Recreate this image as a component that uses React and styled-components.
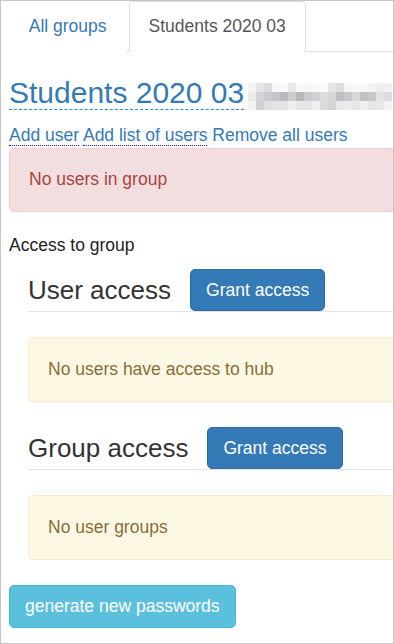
import React from 'react';
import styled, { createGlobalStyle } from 'styled-components';

const GlobalStyle = createGlobalStyle`
  html, body {
    margin: 0;
    padding: 0;
    background: #fff;
  }
  body {
    font-family: "Liberation Sans", Arial, Helvetica, sans-serif;
    font-size: 17.5px;
    line-height: 25px;
    color: #333;
  }
`;

// pixelated (blurred-out) owner name next to the title
const MOSAIC = [
  ['#f4f4f6', '#e6e4e6', '#dcdce0', '#f6f6f8', '#f8f8f8', '#e8e8ea', '#f8f8f8', '#f6f6f6', '#f8f8f8', '#fafafa', '#e6e4e6', '#dedde0', '#f6f6f6', '#f8f8fa', '#f8f8f8', '#f4f4f4', '#eeeef2', '#f0f0f4'],
  ['#ecebec', '#d4d3d8', '#cacad0', '#c4c5ca', '#bbb9bc', '#cacbcf', '#b8b6b6', '#ccccd0', '#d2d2d6', '#dcdcde', '#d6d6d8', '#c0c0c2', '#c8c8cc', '#d8d8da', '#c4c0be', '#c6c8cc', '#e4e2e2', '#dcdce4'],
  ['#f2f2f2', '#d0d0d0', '#e2e0e0', '#e2e4e6', '#e4e2e2', '#eeeef0', '#e6e6e8', '#e4e6ea', '#f0f0f0', '#dadada', '#d4d4d4', '#e8e8ea', '#ececec', '#e8e8ea', '#f2f0ee', '#e4e6e8', '#e8e8e8', '#f2f4f6'],
];

const Mosaic = () => (
  <MosaicSvg width={144} height={27} viewBox="0 0 144 27">
    {MOSAIC.map((row, r) =>
      row.map((c, i) => <rect key={r + '-' + i} x={i * 8} y={r * 9} width={8} height={9} fill={c} />)
    )}
  </MosaicSvg>
);

const App = () => {
  return (
    <>
      <GlobalStyle />
      <St.frame>
        <St.page>
          <St.tabs>
            <St.tab>All groups</St.tab>
            <St.tab $active>Students 2020 03</St.tab>
          </St.tabs>

          <St.title>
            <St.titleLink>Students 2020 03</St.titleLink>
            <Mosaic />
          </St.title>

          <St.actions>
            <St.action $dotted>Add user</St.action>{' '}
            <St.action $dotted>Add list of users</St.action>{' '}
            <St.action>Remove all users</St.action>
          </St.actions>

          <St.alert $kind="danger">No users in group</St.alert>

          <St.label>Access to group</St.label>

          <St.section>
            <St.sectionHeader>
              <St.sectionTitle>User access</St.sectionTitle>
              <St.button>Grant access</St.button>
            </St.sectionHeader>
            <St.alert $kind="warning">No users have access to hub</St.alert>

            <St.sectionHeader>
              <St.sectionTitle>Group access</St.sectionTitle>
              <St.button>Grant access</St.button>
            </St.sectionHeader>
            <St.alert $kind="warning">No user groups</St.alert>
          </St.section>

          <St.button $info>generate new passwords</St.button>
        </St.page>
      </St.frame>
    </>
  );
};

export default App;

const ALERTS = {
  danger: { bg: '#f2dede', border: '#ebccd1', color: '#a94442', pad: '18.5px', gap: '21.5px' },
  warning: { bg: '#fcf8e3', border: '#faebcc', color: '#8a6d3b', pad: '19px', gap: '25px' },
};

const MosaicSvg = styled.svg`
  display: inline-block;
  vertical-align: top;
  margin-left: 4px;
  margin-top: 7px;
`;

const St = {
  frame: styled.div`
    width: 394px;
    height: 644px;
    box-sizing: border-box;
    border: 1px solid #c6c6c6;
    overflow: hidden;
  `,
  page: styled.div`
    width: 440px;
    padding-left: 8px;
  `,
  tabs: styled.ul`
    display: flex;
    margin: 0;
    padding: 0;
    list-style: none;
    border-bottom: 1px solid #ddd;
  `,
  tab: styled.li`
    margin: 0 2.5px -1px 0;
    padding: 12px 18.75px;
    border: 1px solid ${({ $active }) => ($active ? '#ddd' : 'transparent')};
    border-bottom-color: transparent;
    border-radius: 5px 5px 0 0;
    background: #fff;
    color: ${({ $active }) => ($active ? '#555' : '#337ab7')};
    white-space: nowrap;
  `,
  title: styled.h2`
    margin: 24px 0 12.5px;
    font-size: 30px;
    font-weight: 400;
    line-height: 33px;
    white-space: nowrap;
  `,
  titleLink: styled.a`
    color: #337ab7;
    border-bottom: 1px dashed #1a93e0;
    cursor: pointer;
  `,
  actions: styled.div`
    white-space: nowrap;
  `,
  action: styled.a`
    color: #337ab7;
    cursor: pointer;
    border-bottom: ${({ $dotted }) => ($dotted ? '1px dotted #1a1aff' : 'none')};
  `,
  alert: styled.div`
    margin-bottom: ${({ $kind }) => ALERTS[$kind].gap};
    padding: ${({ $kind }) => ALERTS[$kind].pad} 19px;
    border: 1px solid ${({ $kind }) => ALERTS[$kind].border};
    border-radius: 5px;
    background: ${({ $kind }) => ALERTS[$kind].bg};
    color: ${({ $kind }) => ALERTS[$kind].color};
  `,
  label: styled.div`
    color: #222;
  `,
  section: styled.div`
    margin: 11px 0 0 19px;
  `,
  sectionHeader: styled.div`
    display: flex;
    align-items: center;
    gap: 19px;
    margin-bottom: 25px;
    border-bottom: 1px solid #e4e4e4;
  `,
  sectionTitle: styled.h3`
    margin: 0;
    font-size: 26px;
    font-weight: 400;
    line-height: 30px;
    color: #333;
  `,
  button: styled.button`
    display: inline-block;
    padding: 7.5px 15px;
    font-family: inherit;
    font-size: 17.5px;
    line-height: 25px;
    color: #fff;
    background: ${({ $info }) => ($info ? '#5bc0de' : '#337ab7')};
    border: 1px solid ${({ $info }) => ($info ? '#46b8da' : '#2e6da4')};
    border-radius: 5px;
    white-space: nowrap;
    cursor: pointer;
    ${({ $info }) => ($info ? 'height: 43px;' : '')}
  `,
};
